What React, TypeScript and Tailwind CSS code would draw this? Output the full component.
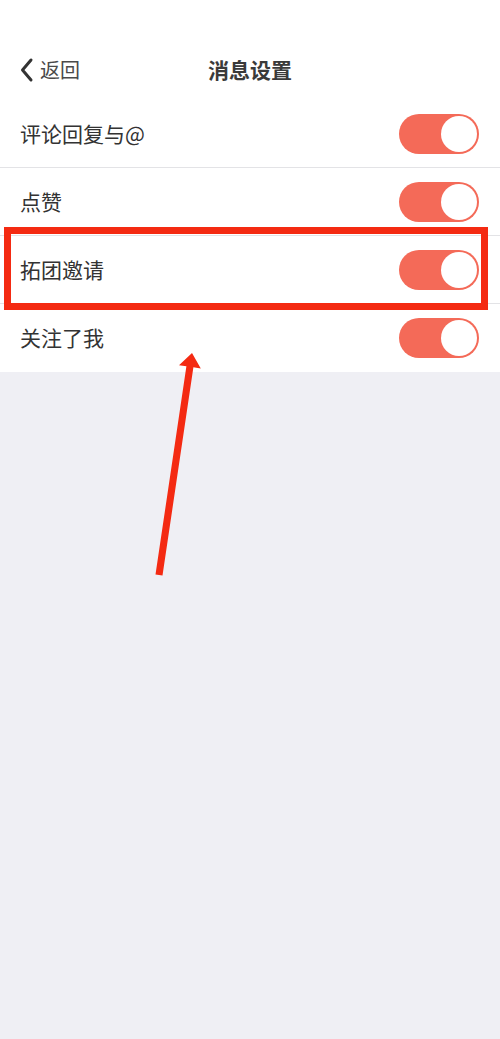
import React from "react";

const items = ["评论回复与@", "点赞", "拓团邀请", "关注了我"];

function Toggle() {
  return (
    <div className="flex h-[40px] w-[80px] items-center justify-end rounded-full bg-[#f46a58] p-[2px]">
      <div className="h-[36px] w-[36px] rounded-full bg-white" />
    </div>
  );
}

export default function App() {
  return (
    <div
      className="relative min-h-[1039px] w-[500px] bg-[#efeff4] text-[#333333]"
      style={{ fontFamily: '"Noto Sans CJK SC", "Noto Sans", sans-serif' }}
    >
      <div className="bg-white">
        <div className="relative flex h-[100px] items-end pb-[12px]">
          <div className="flex h-[36px] items-center pl-[19px] text-[20px] text-[#4a4a4a]">
            <svg width="16" height="26" viewBox="0 0 16 26" className="mr-[5px]">
              <path d="M12 3 L3.5 13 L12 23" fill="none" stroke="#333" strokeWidth="3" strokeLinecap="round" strokeLinejoin="round" />
            </svg>
            返回
          </div>
          <div className="absolute inset-x-0 bottom-[12px] flex h-[36px] items-center justify-center text-[21px] font-bold text-[#3a3a3a]">
            消息设置
          </div>
        </div>

        {items.map((label, i) => (
          <div
            key={label}
            className={`flex h-[68px] items-center justify-between pl-[20px] pr-[21px] ${i < items.length - 1 ? "border-b border-[#e3e3e6]" : ""}`}
          >
            <span className="text-[21px]">{label}</span>
            <Toggle />
          </div>
        ))}
      </div>

      {/* annotation box */}
      <div className="absolute left-[4px] top-[227px] h-[83px] w-[484px] border-[7px] border-[#f42a12]" />

      {/* annotation arrow */}
      <svg className="absolute left-0 top-0" width="500" height="1039" viewBox="0 0 500 1039">
        <polygon
          points="155.5,574.5 186.4,366.3 179,365.2 192,353 200.8,368.4 193.4,367.3 162.5,575.5"
          fill="#f42a12"
        />
      </svg>
    </div>
  );
}
